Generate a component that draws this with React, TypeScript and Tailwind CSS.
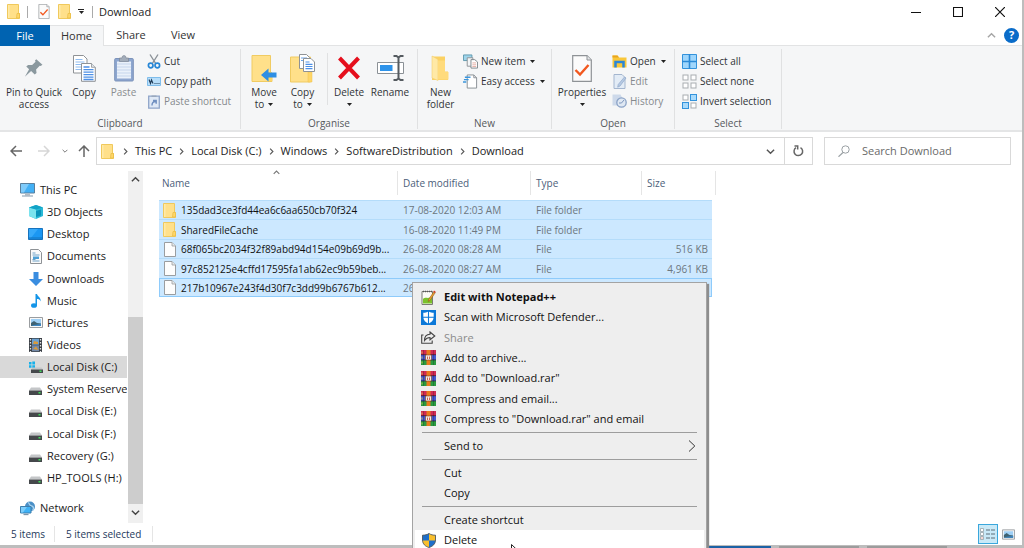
import type { ReactNode } from "react";

/* ---------- Icons ---------- */

const FolderIcon = ({ className = "h-[15px] w-[13px]" }: { className?: string }) => (
  <svg viewBox="0 0 13 15" className={className} aria-hidden="true">
    <path d="M.5.5h11v9h1v5H.5z" fill="#ffe08a" stroke="#f0c95c" />
    <path d="M10 9.500h2.500v4.500H9.500z" fill="#ffd769" stroke="#e8bb44" strokeWidth=".7" />
    <path d="M1 1h1.500v13H1z" fill="#ffeaa8" />
  </svg>
);

const CheckPageIcon = ({ className }: { className: string }) => (
  <svg viewBox="0 0 20 27" className={className} aria-hidden="true">
    <path d="M.7.700h14.300l4.300 4.300v21.300H.7z" fill="#fbfbfb" stroke="#8e9296" strokeWidth="1.200" />
    <path d="M15 .7V5h4.300" fill="#e4e6e8" stroke="#8e9296" />
    <path d="M3.500 15l4.500 4.500 8.500-9.500" fill="none" stroke="#f2581f" strokeWidth="2.400" />
  </svg>
);

const FileIcon = () => (
  <svg viewBox="0 0 12 15" className="h-[15px] w-3" aria-hidden="true">
    <path d="M.5.5h7.500l3.500 3.500v10.500H.5z" fill="#fdfdfd" stroke="#9a9da0" />
    <path d="M8 .5V4h3.500" fill="#e9ebec" stroke="#9a9da0" strokeWidth=".8" />
  </svg>
);

const Caret = ({ className = "" }: { className?: string }) => (
  <svg viewBox="0 0 5 3" className={`inline-block h-[3px] w-[5px] ${className}`} aria-hidden="true">
    <path d="M0 0h5L2.500 3z" fill="#222" />
  </svg>
);

const Chevron = ({ className, d, stroke = "#555" }: { className: string; d: string; stroke?: string }) => (
  <svg viewBox="0 0 10 10" className={className} aria-hidden="true">
    <path d={d} fill="none" stroke={stroke} strokeWidth="1.600" />
  </svg>
);
const RIGHT = "M3 1l4 4-4 4";
const DOWN = "M1 3l4 4 4-4";
const UP = "M1 7l4-4 4 4";

const PinIcon = () => (
  <svg viewBox="0 0 22 22" className="h-[20px] w-[20px]" aria-hidden="true">
    <path d="M13.500 1.500l6.800 5.800-2 1.500-1-.4-4 4.200.5 4-2 1.600-4-3.900L1 20.700 5.600 12.500 2.500 9.300l2-1.700 4.500.2 3.700-3.700-.6-1.300z" fill="#8b999f" />
  </svg>
);

const CopyIcon = () => (
  <svg viewBox="0 0 23 27" className="h-[27px] w-[23px]" aria-hidden="true">
    <path d="M.5.500h10l3.500 3.500v14H.5z" fill="#fff" stroke="#8e9296" />
    <path d="M2.500 4.500h7m-7 2.500h9m-9 2.500h9m-9 2.500h9m-9 2.500h9" stroke="#8fbcf0" />
    <path d="M8.500 8.500h10l3.800 3.800v14H8.500z" fill="#fff" stroke="#8e9296" />
    <path d="M18.500 8.500v3.800h3.800" fill="#dfe5ec" stroke="#8e9296" strokeWidth=".8" />
    <path d="M10.500 12h6m-6 2.700h10m-10 2.500h10m-10 2.500h10m-10 2.500h10m-10 2.300h10" stroke="#4d90e6" strokeWidth="1.300" />
  </svg>
);

const PasteIcon = () => (
  <svg viewBox="0 0 20 28" className="h-7 w-5" aria-hidden="true">
    <rect x=".7" y="4.500" width="18.600" height="22.500" rx="1" fill="#8da6cf" stroke="#7c93ba" />
    <path d="M3 7.500h14v17H3z" fill="#eaf1fa" />
    <path d="M3 10h14M3 13h14M3 16h14M3 19h14M3 22h14" stroke="#c5d5ec" />
    <path d="M5.500 7.500V4H8a2 2.500 0 0 1 4 0h2.500v3.500z" fill="#a3adba" stroke="#7e8896" strokeWidth=".7" />
  </svg>
);

const ScissorsIcon = () => (
  <svg viewBox="0 0 14 15" className="h-[15px] w-[14px]" aria-hidden="true">
    <path d="M3 .5l5.700 9M11 .5l-5.700 9" stroke="#8b9298" strokeWidth="1.400" />
    <circle cx="3.700" cy="11.500" r="2.300" fill="none" stroke="#2786d6" strokeWidth="1.700" />
    <circle cx="10.300" cy="11.500" r="2.300" fill="none" stroke="#2786d6" strokeWidth="1.700" />
  </svg>
);

const CopyPathIcon = () => (
  <svg viewBox="0 0 14 9" className="h-[9px] w-[14px]" aria-hidden="true">
    <path d="M.5.500h13v8H.5z" fill="#b7defa" stroke="#7fbdeb" />
    <path d="M2 2.500l1.500 4 1-3.500 1.500 3.500M7.500 6.500h1m1 0h1m1 0h1" fill="none" stroke="#1f3b57" strokeWidth="1.100" />
  </svg>
);

const PasteShortcutIcon = () => (
  <svg viewBox="0 0 12 15" className="h-[15px] w-3" aria-hidden="true">
    <path d="M.7 2.200h10.600v12H.7z" fill="#dfe9f6" stroke="#8fa5c9" strokeWidth="1.300" />
    <path d="M3.500 3V1.500h5V3z" fill="#9aa9bd" />
    <path d="M4 11.500c0-2.500 1-4 3.500-4M5 6.500h3.200v3.300" fill="none" stroke="#6f8fc0" strokeWidth="1.400" />
  </svg>
);

const MoveToIcon = () => (
  <svg viewBox="0 0 26 27" className="h-[27px] w-[26px]" aria-hidden="true">
    <path d="M1 .5h18.500v21.500H21v4.500H1z" fill="#ffe08a" stroke="#f0cb62" />
    <path d="M17 17h4v9h-4z" fill="#ffd667" />
    <path d="M10 20l7.500-6.500v4H25.500v5h-8v4z" fill="#2f8fe4" />
  </svg>
);

const CopyToIcon = () => (
  <svg viewBox="0 0 26 29" className="h-[29px] w-[26px]" aria-hidden="true">
    <path d="M.5 3h20v25H.5z" fill="#ffe08a" stroke="#f0cb62" />
    <path d="M18 18h4v10h-4z" fill="#ffd667" stroke="#ecc350" strokeWidth=".5" />
    <path d="M9.500.500h7l3 3v11h-10z" fill="#fff" stroke="#8e9296" />
    <path d="M11 4h6m-6 2.500h6" stroke="#6aa5ec" />
    <path d="M13.500 4.500h7.500l3.500 3.500v9.500h-11z" fill="#fff" stroke="#8e9296" />
    <path d="M15.500 8h4m-4 2.300h7m-7 2.200h7m-7 2.200h7" stroke="#4d90e6" strokeWidth="1.200" />
  </svg>
);

const DeleteIcon = () => (
  <svg viewBox="0 0 24 24" className="h-6 w-6" aria-hidden="true">
    <path d="M2.500 2l19 20M21.500 2l-19 20" stroke="#e50f1d" strokeWidth="4" />
  </svg>
);

const RenameIcon = () => (
  <svg viewBox="0 0 27 26" className="h-[26px] w-[27px]" aria-hidden="true">
    <path d="M.5 7.500h26v11H.5z" fill="#fff" stroke="#8b9196" />
    <path d="M3 10h12.500v6H3z" fill="#2d93ea" />
    <path d="M16.500 1h3l2 1.500 2-1.500h3M21.500 2.500v21M16.500 25h3l2-1.500 2 1.500h3" fill="none" stroke="#555b60" strokeWidth="2" />
  </svg>
);

const NewFolderIcon = () => (
  <svg viewBox="0 0 19 26" className="h-[26px] w-[19px]" aria-hidden="true">
    <path d="M1 1.500h13v15h3V25H1z" fill="#fbd163" />
    <path d="M1 1l6 3.500V25.500L1 23z" fill="#ffe9a6" stroke="#f3d070" strokeWidth=".6" />
    <path d="M7 5.500h7V17h3.500v7.500H7z" fill="#ffdb7c" />
  </svg>
);

const NewItemIcon = () => (
  <svg viewBox="0 0 16 15" className="h-[15px] w-4" aria-hidden="true">
    <path d="M.5.500h9v6h-9z" fill="#9fd4ea" stroke="#5f97ad" />
    <path d="M4.500 3.500h6v9h-6z" fill="#f3f6f8" stroke="#8e9296" />
    <path d="M8.500 5.500h4l3 2.500v6.500h-7z" fill="#fff" stroke="#7d858b" />
    <path d="M10 9h4m-4 2h4m-4 1.800h4" stroke="#e09a8d" strokeWidth=".8" />
  </svg>
);

const EasyAccessIcon = () => (
  <svg viewBox="0 0 16 15" className="h-[15px] w-4" aria-hidden="true">
    <path d="M4.500.500h7l3 3v11h-10z" fill="#fff" stroke="#888e93" />
    <path d="M11.500.5v3h3" fill="none" stroke="#888e93" />
    <path d="M2 3h6M1 5.500h5M0 8h3.500" stroke="#3b96dd" strokeWidth="1.500" />
  </svg>
);

const OpenIcon = () => (
  <svg viewBox="0 0 15 13" className="h-[13px] w-[15px]" aria-hidden="true">
    <path d="M.5.500h5l1.500 2h7.500v10H.5z" fill="#f9c73b" />
    <path d="M.5.500h5l1.500 2H.5z" fill="#e9a51e" />
    <path d="M3.500 12.500V7h8v5.500" fill="none" stroke="#2b86d8" strokeWidth="2.500" />
  </svg>
);

const EditIcon = () => (
  <svg viewBox="0 0 15 15" className="h-[15px] w-[15px]" aria-hidden="true">
    <path d="M2 .5h8l3 3v11H2z" fill="#e3ecf6" stroke="#a4b6cf" />
    <path d="M12.500 3l1.500 1-6 8-2.300 1.200.5-2.700z" fill="#b7cae3" stroke="#8fa8ca" strokeWidth=".7" />
  </svg>
);

const HistoryIcon = () => (
  <svg viewBox="0 0 15 14" className="h-[14px] w-[15px]" aria-hidden="true">
    <path d="M.5.500h8l1 2v9h-9z" fill="#cdd9ea" />
    <circle cx="9.500" cy="8.500" r="4.700" fill="#dfe8f3" stroke="#8aa2c6" strokeWidth="1.300" />
    <path d="M9.500 9l2.500-3M9.500 9H7" stroke="#7d96bd" fill="none" />
  </svg>
);

type Cell = [number, number];
const CELLS: Cell[] = [[0, 0], [8, 0], [0, 8], [8, 8]];
const SelectIcon = ({ filled }: { filled: boolean[] }) => (
  <svg viewBox="0 0 15 15" className="h-[15px] w-[15px]" aria-hidden="true">
    {CELLS.map(([x, y], i) =>
      filled[i] ? (
        <rect key={i} x={x + 0.5} y={y + 0.5} width="6" height="6" fill="#a9dafb" stroke="#3393dc" />
      ) : (
        <rect key={i} x={x + 1} y={y + 1} width="5" height="5" fill="#fff" stroke="#a9adb1" />
      ),
    )}
  </svg>
);

const SelectAllIcon = () => (
  <svg viewBox="0 0 15 15" className="h-[15px] w-[15px]" aria-hidden="true">
    <path d="M.5.500h14v14H.5z" fill="#9fd6fc" stroke="#3393dc" />
    <path d="M7.500 0v15M0 7.500h15" stroke="#2b8ad6" strokeWidth="1.600" />
  </svg>
);

const MonitorIcon = () => (
  <svg viewBox="0 0 15 14" className="h-[14px] w-[15px]" aria-hidden="true">
    <path d="M.5.500h14v9.500H.5z" fill="#43b0f5" stroke="#5a7f9c" />
    <path d="M1 1h8L4 9.500H1z" fill="#7fcbfa" />
    <path d="M5 11h5v1.500H5z" fill="#b5bcc2" />
    <path d="M2 12.500h11v1H2z" fill="#8298ad" />
  </svg>
);

const CubeIcon = () => (
  <svg viewBox="0 0 14 14" className="h-[14px] w-[14px]" aria-hidden="true">
    <path d="M0 2.500L7 0l7 2.500v8.500l-7 3-7-3z" fill="#29b9d6" />
    <path d="M0 2.500L7 4.500V14l-7-3z" fill="#7be3ee" />
    <path d="M0 2.500L7 0l7 2.500-7 2z" fill="#12a3c6" />
    <path d="M7 6l5-1.500v6L7 12z" fill="#0b93ba" />
  </svg>
);

const DesktopIcon = () => (
  <svg viewBox="0 0 15 12" className="h-3 w-[15px]" aria-hidden="true">
    <path d="M.5.500h14v11H.5z" fill="#1b97f3" stroke="#1773bd" />
    <path d="M1 1h9L3 10H1z" fill="#36a9fa" />
    <path d="M1 10h13" stroke="#1272bd" />
  </svg>
);

const DocumentsIcon = () => (
  <svg viewBox="0 0 12 15" className="h-[15px] w-3" aria-hidden="true">
    <path d="M.5.500h8l3 3v11H.5z" fill="#fafafa" stroke="#8e9296" />
    <path d="M2.500 4h3m-3 2h7m-7 6h7m-7-1.500h3" stroke="#6ea3c9" />
    <path d="M3 7.500h6V10H3z" fill="#4ea0d6" />
  </svg>
);

const DownloadsIcon = () => (
  <svg viewBox="0 0 14 14" className="h-[14px] w-[14px]" aria-hidden="true">
    <path d="M4.500 0h5v7H14l-7 7-7-7h4.500z" fill="#3a8de0" />
  </svg>
);

const MusicIcon = () => (
  <svg viewBox="0 0 10 14" className="h-[14px] w-[10px]" aria-hidden="true">
    <ellipse cx="3" cy="11.500" rx="3" ry="2.300" fill="#1495e8" />
    <path d="M4.500 0H6c.3 2.500 4 3 3.700 7.500C9 5.500 7.500 5 6 5v6.500H4.500z" fill="#1495e8" />
  </svg>
);

const PictureIcon = ({ className = "h-[11px] w-[14px]" }: { className?: string }) => (
  <svg viewBox="0 0 14 11" className={className} aria-hidden="true">
    <path d="M.5.500h13v10H.5z" fill="#f8f8f8" stroke="#9a9da0" />
    <path d="M2 2h10v7H2z" fill="#9fd0f6" />
    <path d="M2 6l3-2 3 2 4 .5V9H2z" fill="#3f6272" />
    <path d="M5 8l7-1v2H2z" fill="#3d87c4" />
  </svg>
);

const VideoIcon = () => (
  <svg viewBox="0 0 13 14" className="h-[14px] w-[13px]" aria-hidden="true">
    <path d="M0 0h13v14H0z" fill="#3a3f45" />
    <path d="M3 .7h7v6H3z" fill="#6aa0d0" />
    <path d="M3 7.300h7v6H3z" fill="#7389a8" />
    <path d="M5 3l4 1v2H4zM4 11l3-2.500L9.500 12z" fill="#d99a3a" />
    <path d="M1.500 1v13M11.500 1v13" stroke="#e2e4e6" strokeWidth="1.300" strokeDasharray="1.500 1.500" />
  </svg>
);

const DriveIcon = () => (
  <svg viewBox="0 0 13 8" className="mt-1 h-2 w-[13px]" aria-hidden="true">
    <path d="M2 .5h9l2 3H0z" fill="#c4c6c8" />
    <path d="M0 3.500h13V8H0z" fill="#45484b" />
    <path d="M9.500 5h2v1.500h-2z" fill="#3ee05a" />
  </svg>
);

const SystemDriveIcon = () => (
  <svg viewBox="0 0 14 13" className="h-[13px] w-[14px]" aria-hidden="true">
    <path d="M0 1h2.500v2.500H0zM3.300.500H6v3H3.300zM0 4.300h2.500v2.500H0zM3.300 4.300H6v3H3.300z" fill="#17b1ea" />
    <path d="M3.500 6.500h9l1.500 2H2z" fill="#c4c6c8" />
    <path d="M2 8.500h12V12H2z" fill="#45484b" />
    <path d="M10.500 9.500h2V11h-2z" fill="#3ee05a" />
  </svg>
);

const NetworkIcon = () => (
  <svg viewBox="0 0 15 15" className="h-[15px] w-[15px]" aria-hidden="true">
    <circle cx="10" cy="5.500" r="5" fill="#4a8fc6" />
    <path d="M8 1.500c2 1 1 3 3.500 3.500S14 8 12.500 9.500" fill="none" stroke="#a9d2ee" strokeWidth="1.300" />
    <path d="M.5 5.500h10.500v6.500H.5z" fill="#3fb2f6" stroke="#3d7fae" />
    <path d="M1 6h6l-4 5.500H1z" fill="#7ccdfb" />
    <path d="M3.500 13.500h5" stroke="#7b95aa" strokeWidth="1.300" />
  </svg>
);

const NotepadIcon = () => (
  <svg viewBox="0 0 15 15" className="h-[15px] w-[15px]" aria-hidden="true">
    <path d="M1 1.500h10.500v13H1z" fill="#fbfbf6" stroke="#7b7b74" />
    <path d="M2 9c3-3 5 1 9-3v7.500H2z" fill="#7cc22c" />
    <path d="M2 1.500h9" stroke="#555" strokeDasharray="1 1" strokeWidth="1.500" />
    <path d="M13 1.500l1.300 1L9 10.500l-1.800 1 .4-2z" fill="#f0a431" stroke="#8d5a1d" strokeWidth=".6" />
    <path d="M13 .5l1.700 1.300-.8 1.200-1.600-1.200z" fill="#d33b2f" />
  </svg>
);

const DefenderIcon = () => (
  <svg viewBox="0 0 15 15" className="h-[15px] w-[15px]" aria-hidden="true">
    <path d="M0 0h15v15H0z" fill="#0b78d8" />
    <path d="M7.500 1.500c1.500 1 3.500 1.300 5.200 1.300V7c0 3.300-2.500 5.500-5.200 6.700C4.800 12.500 2.300 10.300 2.300 7V2.800c1.700 0 3.700-.3 5.200-1.300z" fill="#fff" />
    <path d="M7.500 1v13M2 7.300h11" stroke="#0b78d8" strokeWidth="1.100" />
  </svg>
);

const ShareIcon = () => (
  <svg viewBox="0 0 15 13" className="h-[13px] w-[15px]" aria-hidden="true">
    <path d="M2.500 4H.7v8.200h10.500V9.500" fill="none" stroke="#444" strokeWidth="1.100" />
    <path d="M9 1l4.800 4L9 8.800V6.500C6.500 6.500 5 7.500 3.500 9.500 3.500 6 5.500 3.500 9 3.300z" fill="none" stroke="#444" strokeWidth="1.100" />
  </svg>
);

const RarIcon = () => (
  <svg viewBox="0 0 15 15" className="h-[15px] w-[15px]" aria-hidden="true">
    <path d="M0 0h15v5H0z" fill="#d02a52" />
    <path d="M0 5h15v5H0z" fill="#4658cf" />
    <path d="M0 10h15v5H0z" fill="#2a9a40" />
    <path d="M0 4.700h15M0 9.900h15" stroke="#2b1d35" strokeWidth=".7" />
    <path d="M2.500 0v15M12.500 0v15" stroke="#000" strokeOpacity=".2" />
    <path d="M5.500 0h4v15h-4z" fill="#e97b1c" />
    <path d="M4.500 5h6v5h-6z" fill="#f3ede6" stroke="#7a3b1d" strokeWidth=".6" />
    <path d="M6.500 6.500v2.500M8.500 6.500v2.500" stroke="#c2412c" strokeWidth=".8" />
    <path d="M1 1.500v2M1 6.500v2M1 11.500v2" stroke="#e9d24a" strokeWidth=".8" />
  </svg>
);

const ShieldIcon = () => (
  <svg viewBox="0 0 14 15" className="h-[15px] w-[14px]" aria-hidden="true">
    <path d="M7 .5c2 1.300 4 1.700 6.500 1.700V7c0 4-3 6.500-6.500 7.500C3.500 13.500.5 11 .5 7V2.200C3 2.200 5 1.800 7 .5z" fill="#f9bf2d" />
    <path d="M7 .5V7.500H.5V2.200C3 2.200 5 1.800 7 .5zM7 7.500h6.500c-.2 3.700-3 6-6.500 7z" fill="#1f6fc9" />
    <path d="M7 .5c2 1.300 4 1.700 6.500 1.700V7c0 4-3 6.500-6.500 7.500C3.500 13.500.5 11 .5 7V2.200C3 2.200 5 1.800 7 .5z" fill="none" stroke="#4e5a66" strokeWidth=".9" />
  </svg>
);

/* ---------- Ribbon ---------- */

const BigButton = ({ icon, lines, caret, className, disabled }: { icon: ReactNode; lines: string[]; caret?: boolean; className: string; disabled?: boolean }) => (
  <button type="button" disabled={disabled} className={`flex shrink-0 flex-col items-center self-start whitespace-nowrap leading-3 disabled:text-[#8a8d90] ${className}`}>
    <span className="mb-[3px] mt-1 flex h-[30px] items-center justify-center">{icon}</span>
    {lines.map((line, i) => (
      <span key={line} className="flex items-center">
        {line}
        {caret && lines.length > 1 && i === lines.length - 1 && <Caret className="ml-1" />}
      </span>
    ))}
    {caret && lines.length === 1 && <span className="flex h-3 items-center"><Caret /></span>}
  </button>
);

const SmallButton = ({ icon, label, caret, disabled }: { icon: ReactNode; label: string; caret?: boolean; disabled?: boolean }) => (
  <button type="button" disabled={disabled} className="flex items-center gap-[3px] whitespace-nowrap disabled:text-[#85898d]">
    <span className="flex w-[15px] shrink-0 justify-center">{icon}</span>
    {label}
    {caret && <Caret className="ml-[2px]" />}
  </button>
);

const SmallList = ({ children }: { children: ReactNode }) => <div className="grid auto-rows-[20px] content-start pt-[2px]">{children}</div>;

const RibbonGroup = ({ label, className, children }: { label: string; className: string; children: ReactNode }) => (
  <section aria-label={label} className={`flex shrink-0 flex-col border-r border-[#e0e1e2] ${className}`}>
    <div className="flex min-h-0 flex-1">{children}</div>
    <h2 className="text-center leading-3 text-[#55595d]">{label}</h2>
  </section>
);

const Ribbon = () => (
  <div className="flex h-[86px] shrink-0 border-b-2 border-[#e4e5e6] bg-[#f5f6f7] pb-px pt-[3px] text-[10px] text-[#303336]">
    <RibbonGroup label="Clipboard" className="w-[241px]">
      <BigButton icon={<PinIcon />} lines={["Pin to Quick", "access"]} className="ml-px w-[66px]" />
      <BigButton icon={<CopyIcon />} lines={["Copy"]} className="w-[34px]" />
      <BigButton icon={<PasteIcon />} lines={["Paste"]} className="w-[45px]" disabled />
      <SmallList>
        <SmallButton icon={<ScissorsIcon />} label="Cut" />
        <SmallButton icon={<CopyPathIcon />} label="Copy path" />
        <SmallButton icon={<PasteShortcutIcon />} label="Paste shortcut" disabled />
      </SmallList>
    </RibbonGroup>
    <RibbonGroup label="Organise" className="w-[177px]">
      <BigButton icon={<MoveToIcon />} lines={["Move", "to"]} caret className="w-[46px]" />
      <BigButton icon={<CopyToIcon />} lines={["Copy", "to"]} caret className="w-[31px]" />
      <div className="mb-3 ml-[9px] mt-1 border-l border-[#e0e1e2]" />
      <BigButton icon={<DeleteIcon />} lines={["Delete"]} caret className="w-[42px]" />
      <BigButton icon={<RenameIcon />} lines={["Rename"]} className="w-10" />
    </RibbonGroup>
    <RibbonGroup label="New" className="w-[134px]">
      <BigButton icon={<NewFolderIcon />} lines={["New", "folder"]} className="w-[45px]" />
      <SmallList>
        <SmallButton icon={<NewItemIcon />} label="New item" caret />
        <SmallButton icon={<EasyAccessIcon />} label="Easy access" caret />
      </SmallList>
    </RibbonGroup>
    <RibbonGroup label="Open" className="w-[123px]">
      <BigButton icon={<CheckPageIcon className="h-[27px] w-5" />} lines={["Properties"]} caret className="w-[60px]" />
      <SmallList>
        <SmallButton icon={<OpenIcon />} label="Open" caret />
        <SmallButton icon={<EditIcon />} label="Edit" disabled />
        <SmallButton icon={<HistoryIcon />} label="History" disabled />
      </SmallList>
    </RibbonGroup>
    <RibbonGroup label="Select" className="w-[107px]">
      <div className="pl-[7px]">
        <SmallList>
          <SmallButton icon={<SelectAllIcon />} label="Select all" />
          <SmallButton icon={<SelectIcon filled={[false, false, false, false]} />} label="Select none" />
          <SmallButton icon={<SelectIcon filled={[false, true, true, false]} />} label="Invert selection" />
        </SmallList>
      </div>
    </RibbonGroup>
  </div>
);

/* ---------- Header bars ---------- */

const TitleBar = () => (
  <header className="flex h-[23px] shrink-0 items-center pl-[7px] text-[#222]">
    <FolderIcon />
    <span className="ml-[7px] h-3 border-l border-[#aaa]" />
    <CheckPageIcon className="ml-[10px] h-[15px] w-3" />
    <FolderIcon className="ml-2 h-[15px] w-[13px]" />
    <button type="button" aria-label="Customise Quick Access Toolbar" className="ml-[7px] flex flex-col items-center gap-px">
      <span className="w-[6px] border-t border-[#222]" />
      <Caret />
    </button>
    <span className="ml-2 h-3 border-l border-[#aaa]" />
    <h1 className="ml-[6px]">Download</h1>
    <div className="ml-auto flex h-full items-center gap-8 pr-[17px]">
      <button type="button" aria-label="Minimise">
        <svg viewBox="0 0 10 10" className="h-[10px] w-[10px]"><path d="M0 5.500h10" stroke="#111" /></svg>
      </button>
      <button type="button" aria-label="Maximise">
        <svg viewBox="0 0 10 10" className="h-[10px] w-[10px]"><path d="M.5.500h9v9h-9z" fill="none" stroke="#111" strokeWidth="1.100" /></svg>
      </button>
      <button type="button" aria-label="Close">
        <svg viewBox="0 0 10 10" className="h-[10px] w-[10px]"><path d="M0 0l10 10M10 0L0 10" stroke="#111" strokeWidth="1.200" /></svg>
      </button>
    </div>
  </header>
);

const Tabs = () => (
  <nav aria-label="Ribbon tabs" className="mt-[2px] flex h-[21px] shrink-0 text-[#333]">
    <button type="button" className="w-[50px] bg-[#0063b1] text-white">File</button>
    <button type="button" className="w-[54px] border-r border-t border-[#e2e3e4] bg-[#f5f6f7]">Home</button>
    <div className="flex flex-1 border-b border-[#e2e3e4]">
      <button type="button" className="w-[54px]">Share</button>
      <button type="button" className="w-[50px]">View</button>
      <div className="ml-auto flex items-center gap-2 pr-[3px]">
        <button type="button" aria-label="Minimise the Ribbon"><Chevron d={UP} stroke="#a5a5a5" className="h-[9px] w-[9px]" /></button>
        <button type="button" aria-label="Help" className="flex h-[15px] w-[15px] items-center justify-center rounded-full bg-[#0a6cc9] font-bold leading-3 text-white">?</button>
      </div>
    </div>
  </nav>
);

const ArrowIcon = ({ d, stroke }: { d: string; stroke: string }) => (
  <svg viewBox="0 0 12 12" className="h-3 w-3" aria-hidden="true">
    <path d={d} fill="none" stroke={stroke} strokeWidth="1.500" />
  </svg>
);

const CRUMBS = ["This PC", "Local Disk (C:)", "Windows", "SoftwareDistribution", "Download"];

const AddressBar = () => (
  <div className="flex shrink-0 items-center pb-[2px] pl-[10px] pr-[11px] pt-[5px] text-[#222]">
    <button type="button" aria-label="Back"><ArrowIcon d="M12 6H1M6 1L1 6l5 5" stroke="#666" /></button>
    <button type="button" aria-label="Forward" disabled className="ml-4"><ArrowIcon d="M0 6h11M6 1l5 5-5 5" stroke="#d6d6d6" /></button>
    <button type="button" aria-label="Recent locations" className="ml-3"><Chevron d={DOWN} stroke="#777" className="h-[6px] w-[6px]" /></button>
    <button type="button" aria-label="Up" className="ml-[10px]"><ArrowIcon d="M6 12V1M1 6l5-5 5 5" stroke="#666" /></button>
    <div className="ml-[6px] flex h-7 min-w-0 flex-1 items-center border border-[#d9d9d9] pl-1">
      <FolderIcon />
      <ol className="flex min-w-0 items-center pl-[2px]">
        {CRUMBS.map((crumb) => (
          <li key={crumb} className="flex items-center">
            <Chevron d={RIGHT} className="mx-[6px] h-[7px] w-[7px]" />
            <a href="#" className="whitespace-nowrap">{crumb}</a>
          </li>
        ))}
      </ol>
      <button type="button" aria-label="Previous locations" className="ml-auto mr-[9px]"><Chevron d={DOWN} className="h-[9px] w-[9px]" /></button>
      <button type="button" aria-label="Refresh" className="flex h-full w-[28px] items-center justify-center border-l border-[#d9d9d9]">
        <svg viewBox="0 0 11 12" className="h-3 w-[11px]"><path d="M7.500 2.600A4.300 4.300 0 1 1 3 2.700M1.500 1h3.200v3.500" fill="none" stroke="#666" strokeWidth="1.500" /></svg>
      </button>
    </div>
    <label className="ml-[11px] flex h-7 w-[187px] shrink-0 items-center border border-[#d9d9d9] pl-[13px]">
      <svg viewBox="0 0 12 12" className="h-3 w-3 shrink-0" aria-hidden="true">
        <circle cx="7.500" cy="4.500" r="3.700" fill="none" stroke="#9aa0a4" />
        <path d="M5 7.500L.5 11.700" stroke="#9aa0a4" strokeWidth="1.200" />
      </svg>
      <input type="search" aria-label="Search Download" placeholder="Search Download" className="ml-3 w-full min-w-0 bg-transparent outline-none placeholder:text-[#6a6a6a]" />
    </label>
  </div>
);

/* ---------- Sidebar ---------- */

const TREE: { label: string; icon: ReactNode; root?: boolean; active?: boolean }[] = [
  { label: "This PC", icon: <MonitorIcon />, root: true },
  { label: "3D Objects", icon: <CubeIcon /> },
  { label: "Desktop", icon: <DesktopIcon /> },
  { label: "Documents", icon: <DocumentsIcon /> },
  { label: "Downloads", icon: <DownloadsIcon /> },
  { label: "Music", icon: <MusicIcon /> },
  { label: "Pictures", icon: <PictureIcon /> },
  { label: "Videos", icon: <VideoIcon /> },
  { label: "Local Disk (C:)", icon: <SystemDriveIcon />, active: true },
  { label: "System Reserved", icon: <DriveIcon /> },
  { label: "Local Disk (E:)", icon: <DriveIcon /> },
  { label: "Local Disk (F:)", icon: <DriveIcon /> },
  { label: "Recovery (G:)", icon: <DriveIcon /> },
  { label: "HP_TOOLS (H:)", icon: <DriveIcon /> },
];

const TreeLink = ({ icon, label, root, active }: { icon: ReactNode; label: string; root?: boolean; active?: boolean }) => (
  <a href="#" className={`flex h-full items-center whitespace-nowrap ${root ? "gap-[5px] pl-5" : "gap-1 pl-7"} ${active ? "bg-[#d9d9d9]" : ""}`}>
    <span className="flex w-[15px] shrink-0 items-center justify-center">{icon}</span>
    {label}
  </a>
);

const Sidebar = () => (
  <aside className="flex w-[143px] shrink-0 pt-[4px]">
    <nav aria-label="Folders" className="flex min-w-0 flex-1 flex-col overflow-hidden pb-1 pt-2 text-[#1a1a1a]">
      <ul className="flex flex-1 flex-col">
        {TREE.map((item) => (
          <li key={item.label} className="flex-1">
            <TreeLink {...item} />
          </li>
        ))}
      </ul>
      <div className="mt-2 h-[22px] shrink-0">
        <TreeLink icon={<NetworkIcon />} label="Network" root />
      </div>
    </nav>
    <div className="ml-px flex w-[15px] flex-col items-center bg-[#f0f0f0]">
      <Chevron d={UP} stroke="#444" className="my-1 h-[9px] w-[9px]" />
      <div className="mt-auto h-[187px] w-full bg-[#cdcdcd]" />
      <Chevron d={DOWN} stroke="#444" className="mb-[6px] mt-1 h-[9px] w-[9px]" />
    </div>
  </aside>
);

/* ---------- File list ---------- */

const FILES = [
  { name: "135dad3ce3fd44ea6c6aa650cb70f324", date: "17-08-2020 12:03 AM", type: "File folder", size: "" },
  { name: "SharedFileCache", date: "16-08-2020 11:49 PM", type: "File folder", size: "" },
  { name: "68f065bc2034f32f89abd94d154e09b69d9b...", date: "26-08-2020 08:28 AM", type: "File", size: "516 KB" },
  { name: "97c852125e4cffd17595fa1ab62ec9b59beb...", date: "26-08-2020 08:27 AM", type: "File", size: "4,961 KB" },
  { name: "217b10967e243f4d30f7c3dd99b6767b612...", date: "26-08-2020 08:27 AM", type: "File", size: "1 KB" },
];

const FileList = () => (
  <main className="min-w-0 flex-1 pl-4 pt-[2px]">
    <Chevron d={UP} stroke="#777" className="mb-[-5px] ml-[114px] h-[7px] w-[7px]" />
    <table className="w-[557px] table-fixed border-separate border-spacing-0 text-[10px] text-[#6d6d6d]">
      <colgroup>
        <col className="w-[239px]" />
        <col className="w-[133px]" />
        <col className="w-[111px]" />
        <col />
      </colgroup>
      <thead>
        <tr className="h-[24px] text-left text-[#4c607a]">
          <th className="border-r border-[#e5e5e5] pl-[3px] font-normal">Name</th>
          <th className="border-r border-[#e5e5e5] pl-[5px] font-normal">Date modified</th>
          <th className="border-r border-[#e5e5e5] pl-[5px] font-normal">Type</th>
          <th className="border-r border-[#e5e5e5] pl-[5px] font-normal">Size</th>
        </tr>
      </thead>
    </table>
    <table aria-label="Files" className="mt-[5px] w-[553px] table-fixed border-separate border-spacing-0 bg-[#cce8ff] text-[10px] leading-3 text-[#6d7780]">
      <colgroup>
        <col className="w-[239px]" />
        <col className="w-[133px]" />
        <col className="w-[111px]" />
        <col />
      </colgroup>
      <tbody>
        {FILES.map((file) => (
          <tr
            key={file.name}
            className="h-[19px] whitespace-nowrap even:h-5 [&>td]:border-t [&>td]:border-[#b4dcfa] last:[&>td]:border-b last:[&>td]:border-[#8ecbfb] last:[&>td:first-child]:border-l last:[&>td:first-child]:pl-[3px] last:[&>td:last-child]:border-r last:[&>td:last-child]:pr-[3px]"
          >
            <td className="pl-1 text-[#111]">
              <span className="flex items-center gap-[5px]">
                {file.type === "File folder" ? <FolderIcon /> : <span className="flex w-[13px] justify-center"><FileIcon /></span>}
                {file.name}
              </span>
            </td>
            <td className="pl-[5px]">{file.date}</td>
            <td className="pl-[5px]">{file.type}</td>
            <td className="pr-1 text-right">{file.size}</td>
          </tr>
        ))}
      </tbody>
    </table>
  </main>
);

/* ---------- Status bar ---------- */

const StatusBar = () => (
  <footer className="flex h-[22px] shrink-0 items-center pl-[11px] pr-[3px] text-[10px] text-[#1e395b]">
    <span className="w-11 border-r border-[#e5e5e5]">5 items</span>
    <span className="w-[98px] border-r border-[#e5e5e5] pl-[11px]">5 items selected</span>
    <div className="ml-auto flex items-center pr-1">
      <button type="button" aria-label="Details view" className="flex h-5 w-5 items-center justify-center border border-[#3aa7dc] bg-[#c9e9f7]">
        <svg viewBox="0 0 16 12" className="h-3 w-4">
          <path d="M.5.500h3v3h-3zM.5 4.500h3v3h-3zM.5 8.500h3v3h-3z" fill="#fff" stroke="#98a3a8" strokeWidth=".8" />
          <path d="M1.500 10h1" stroke="#d8574b" />
          <path d="M6 2h4m1 0h4M6 6h4m1 0h4M6 10h4m1 0h4" stroke="#5f6f78" />
        </svg>
      </button>
      <button type="button" aria-label="Large icons view" className="ml-1"><PictureIcon className="h-[11px] w-[13px]" /></button>
    </div>
  </footer>
);

/* ---------- Context menu ---------- */

const MenuItem = ({ label, icon, className = "", submenu, disabled }: { label: string; icon?: ReactNode; className?: string; submenu?: boolean; disabled?: boolean }) => (
  <button type="button" role="menuitem" disabled={disabled} className={`flex min-h-5 w-full items-center whitespace-nowrap pl-[6px] text-left disabled:text-[#8b8b8b] ${className}`}>
    <span className="mr-2 flex w-[15px] shrink-0 justify-center">{icon}</span>
    {label}
    {submenu && <svg viewBox="0 0 8 12" className="ml-auto mr-2 h-3 w-2"><path d="M1 .5L6.800 6 1 11.500" fill="none" stroke="#333" /></svg>}
  </button>
);

const Divider = () => <hr className="mx-[7px] my-[3px] border-[#9d9d9d]" />;

const ContextMenu = () => (
  <div role="menu" aria-label="File actions" className="absolute left-[412px] top-[282px] w-[295px] border border-[#a3a3a3] bg-[#eeeeee] px-[2px] pt-1 text-[#111] shadow-[2px_2px_1px_#8d8d8d]">
    <div className="grid h-[142px] auto-rows-fr">
      <MenuItem label="Edit with Notepad++" icon={<NotepadIcon />} className="font-bold" />
      <MenuItem label="Scan with Microsoft Defender..." icon={<DefenderIcon />} />
      <MenuItem label="Share" icon={<ShareIcon />} disabled />
      <MenuItem label="Add to archive..." icon={<RarIcon />} />
      <MenuItem label={'Add to "Download.rar"'} icon={<RarIcon />} />
      <MenuItem label="Compress and email..." icon={<RarIcon />} />
      <MenuItem label={'Compress to "Download.rar" and email'} icon={<RarIcon />} />
    </div>
    <Divider />
    <MenuItem label="Send to" submenu />
    <Divider />
    <MenuItem label="Cut" />
    <MenuItem label="Copy" />
    <Divider />
    <MenuItem label="Create shortcut" />
    <MenuItem label="Delete" icon={<ShieldIcon />} className="bg-white" />
  </div>
);

const Pointer = () => (
  <svg viewBox="0 0 12 18" className="absolute left-[511px] top-[544px] h-[18px] w-3" aria-hidden="true">
    <path d="M.5.500v14l3.500-3 2.500 5.500 2-1L6 10.500h5z" fill="#fff" stroke="#222" />
  </svg>
);

export default function App() {
  return (
    <div className="relative flex h-screen flex-col overflow-hidden bg-[#bdbdbd] font-['Open_Sans','Noto_Sans',sans-serif] text-[11px] leading-4">
      <div className="mr-[2px] flex min-h-0 flex-1 flex-col bg-white">
        <TitleBar />
        <Tabs />
        <Ribbon />
        <AddressBar />
        <div className="flex min-h-0 flex-1">
          <Sidebar />
          <FileList />
        </div>
        <StatusBar />
      </div>
      <div className="flex h-[3px] shrink-0 items-end gap-2 pl-[707px]">
        <span className="h-[2px] w-16 bg-[#1c62a5]" />
        <span className="h-[2px] w-20 bg-[#9c9c9c]" />
        <span className="h-[2px] w-20 bg-[#9c9c9c]" />
      </div>
      <ContextMenu />
      <Pointer />
    </div>
  );
}
